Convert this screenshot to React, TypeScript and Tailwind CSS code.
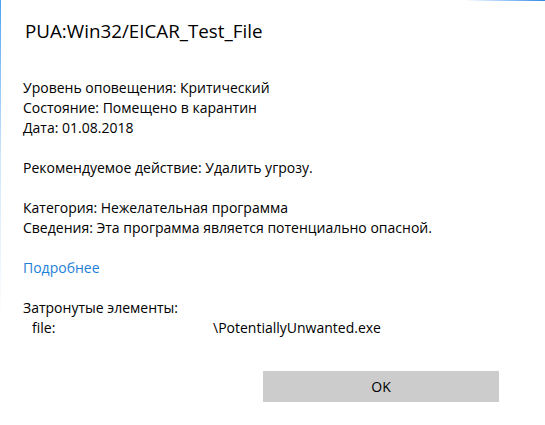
import React from "react";

export default function App() {
  const font = { fontFamily: '"Open Sans", "Noto Sans", sans-serif' };
  return (
    <div className="relative w-[545px] h-[425px] bg-white overflow-hidden text-black" style={font}>
      <div className="absolute left-0 top-0 w-px h-[320px] bg-gradient-to-b from-[#4aa3f0] via-[#cfe6fb] to-white" />
      <div className="absolute right-0 top-0 h-px w-[80px] bg-gradient-to-r from-white to-[#2b8ae6]" />
      <div className="pt-[19px] pl-[23px]">
        <div className="text-[18.8px] leading-[24px] pl-[2px]">PUA:Win32/EICAR_Test_File</div>
        <div className="mt-[35px] text-[14px] leading-[20px]">
          <div>Уровень оповещения: Критический</div>
          <div>Состояние: Помещено в карантин</div>
          <div>Дата: 01.08.2018</div>
          <div className="h-[20px]" />
          <div>Рекомендуемое действие: Удалить угрозу.</div>
          <div className="h-[20px]" />
          <div>Категория: Нежелательная программа</div>
          <div>Сведения: Эта программа является потенциально опасной.</div>
          <div className="h-[20px]" />
          <div className="text-[#1f80d8]">Подробнее</div>
          <div className="h-[20px]" />
          <div>Затронутые элементы:</div>
          <div className="flex">
            <span className="pl-[9px] w-[190px]">file:</span>
            <span>\PotentiallyUnwanted.exe</span>
          </div>
        </div>
      </div>
      <div className="flex justify-end pr-[46px] mt-[33px]">
        <button className="w-[236px] h-[31px] bg-[#cccccc] text-[14px] text-black">OK</button>
      </div>
    </div>
  );
}
